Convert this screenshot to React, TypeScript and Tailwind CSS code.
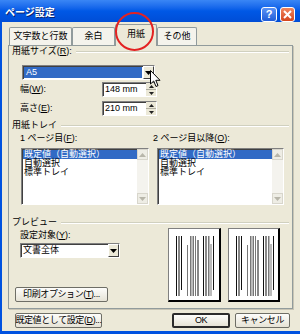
import React from 'react';

const sunken =
  'border border-t-[#808080] border-l-[#808080] border-r-white border-b-white shadow-[inset_1px_1px_0_#404040]';

const GroupHeader: React.FC<{ children: React.ReactNode }> = ({ children }) => (
  <div className="flex items-center h-[12px] px-[3px]">
    <span className="whitespace-nowrap">{children}</span>
    <div className="flex-1 ml-[4px] h-[2px] border-t border-t-[#D0D0BF] border-b border-b-white" />
  </div>
);

const DownTri: React.FC<{ color?: string }> = ({ color = '#000' }) => (
  <svg width="7" height="4" viewBox="0 0 7 4">
    <path d="M0 0 H7 L3.5 4 Z" fill={color} />
  </svg>
);

const UpTri: React.FC<{ color?: string }> = ({ color = '#000' }) => (
  <svg width="7" height="4" viewBox="0 0 7 4">
    <path d="M0 4 H7 L3.5 0 Z" fill={color} />
  </svg>
);

const DropBtn: React.FC = () => (
  <div className="w-[11px] h-full flex items-center justify-center bg-[#ECE9D8] border border-t-white border-l-white border-r-[#404040] border-b-[#404040]">
    <DownTri />
  </div>
);

const SpinBox: React.FC<{ value: string }> = ({ value }) => (
  <div className={`flex w-[55px] h-[15px] bg-white ${sunken}`}>
    <div className="flex-1 pl-[2px] leading-[13px]">{value}</div>
    <div className="w-[10px] flex flex-col bg-[#ECE9D8]">
      <div className="flex-1 flex items-center justify-center border-b border-b-[#B0AEA0]">
        <svg width="5" height="3" viewBox="0 0 5 3"><path d="M0 3 H5 L2.5 0 Z" fill="#222" /></svg>
      </div>
      <div className="flex-1 flex items-center justify-center">
        <svg width="5" height="3" viewBox="0 0 5 3"><path d="M0 0 H5 L2.5 3 Z" fill="#222" /></svg>
      </div>
    </div>
  </div>
);

const ListBox: React.FC<{ width: string }> = ({ width }) => {
  const items = ['既定値（自動選択）', '自動選択', '標準トレイ'];
  return (
    <div className={`flex h-[57px] bg-white ${sunken} ${width}`}>
      <div className="flex-1 pt-[1px] pl-[1px]">
        {items.map((item, i) => (
          <div
            key={item}
            className={`h-[9px] leading-[9px] pl-[1px] whitespace-nowrap ${
              i === 0 ? 'bg-[#316AC5] text-white' : ''
            }`}
          >
            {item}
          </div>
        ))}
      </div>
      <div className="w-[11px] flex flex-col justify-between bg-[#F4F3EE]">
        <div className="h-[11px] flex items-center justify-center bg-[#EEEDE5] border border-[#D8D6CC]">
          <UpTri color="#B8B6AA" />
        </div>
        <div className="h-[11px] flex items-center justify-center bg-[#EEEDE5] border border-[#D8D6CC]">
          <DownTri color="#B8B6AA" />
        </div>
      </div>
    </div>
  );
};

const PagePreview: React.FC<{ width: number }> = ({ width }) => {
  const lines = [
    { x: 9, y1: 10, y2: 70, c: '#111', w: 1 },
    { x: 11.5, y1: 10, y2: 70, c: '#111', w: 1 },
    { x: 14, y1: 10, y2: 64, c: '#111', w: 1 },
    { x: 20, y1: 19, y2: 70, c: '#777', w: 1 },
    { x: 23, y1: 10, y2: 70, c: '#777', w: 1.5 },
    { x: 25.5, y1: 10, y2: 70, c: '#777', w: 1.5 },
    { x: 28, y1: 10, y2: 70, c: '#777', w: 1 },
    { x: 30.5, y1: 14, y2: 70, c: '#111', w: 1 },
    { x: 36, y1: 10, y2: 70, c: '#111', w: 1 },
    { x: 38.5, y1: 10, y2: 70, c: '#111', w: 1 },
    { x: 41, y1: 10, y2: 70, c: '#777', w: 1.5 },
    { x: 43.5, y1: 18, y2: 70, c: '#777', w: 1 },
    { x: 46, y1: 10, y2: 64, c: '#111', w: 1 },
  ];
  return (
    <div
      className="h-[74px] bg-white border border-[#808080] border-r-2 border-b-2 border-r-black border-b-black"
      style={{ width }}
    >
      <svg width={width - 3} height="71" viewBox={`0 0 ${width - 3} 71`}>
        {lines.map((l, i) => (
          <rect key={i} x={l.x - 2} y={l.y1 - 3} width={l.w} height={l.y2 - l.y1} fill={l.c} />
        ))}
      </svg>
    </div>
  );
};

const Button: React.FC<{ children: React.ReactNode; className?: string; primary?: boolean }> = ({
  children,
  className = '',
  primary,
}) => (
  <div
    className={`h-[15px] flex items-center justify-center whitespace-nowrap tracking-[-0.4px] rounded-[2px] bg-linear-to-b from-[#FDFDFB] to-[#E6E3D6] ${
      primary ? 'border-2 border-[#2B2B2B]' : 'border border-[#6E6E66]'
    } ${className}`}
  >
    {children}
  </div>
);

const Tab: React.FC<{ label: string; width: string; selected?: boolean }> = ({ label, width, selected }) => (
  <div
    className={`${width} flex items-center justify-center rounded-t-[2px] border-t border-l border-r border-[#919B9C] ${
      selected ? 'h-[22px] -mb-px relative z-10 bg-[#ECE9D8] pb-[2px]' : 'h-[18px] bg-[#F4F3EC]'
    }`}
  >
    {label}
  </div>
);

export default function App() {
  return (
    <div className="relative w-[300px] h-[334px] overflow-hidden bg-[#0052E0] flex flex-col text-[9px] text-black font-['Liberation_Sans','Noto_Sans_CJK_JP',sans-serif]">
      {/* title bar */}
      <div className="h-[22px] flex bg-linear-to-b from-[#3A86F5] via-[#0058E6] to-[#004DD6]">
        <div className="flex items-center pl-[5px] pt-[3px] text-white font-bold text-[10px] [text-shadow:1px_1px_0_#0A246A]">
          ページ設定
        </div>
        <div className="ml-auto mr-[5px] mt-[7px] flex gap-[3px] h-[15px]">
          <div className="w-[16px] h-[15px] rounded-[3px] border border-white bg-linear-to-b from-[#5B92F5] to-[#1F5CD8] text-white font-bold text-[11px] leading-[13px] text-center">
            ?
          </div>
          <div className="w-[15px] h-[15px] rounded-[3px] border border-white bg-linear-to-b from-[#F0855E] to-[#D4441A] flex items-center justify-center">
            <svg width="9" height="9" viewBox="0 0 9 9">
              <path d="M1 1 L8 8 M8 1 L1 8" stroke="white" strokeWidth="2" />
            </svg>
          </div>
        </div>
      </div>

      {/* body */}
      <div className="flex-1 ml-[2px] mb-[3px] bg-[#ECE9D8] flex flex-col">
        <div className="h-[23px] flex items-end pl-[7px]">
          <Tab label="文字数と行数" width="w-[63px]" />
          <Tab label="余白" width="w-[43px]" />
          <Tab label="用紙" width="w-[42px]" selected />
          <Tab label="その他" width="w-[40px]" />
        </div>

        <div className="ml-[6px] w-[285px] h-[264px] border border-[#919B9C] shadow-[1px_1px_0_#C8C5B5] flex flex-col">
          <GroupHeader>
            用紙サイズ(<u>R</u>):
          </GroupHeader>

          <div className={`mt-[7px] ml-[13px] w-[133px] h-[15px] flex bg-white ${sunken}`}>
            <div className="flex-1 p-[1px]">
              <div className="h-full bg-[#316AC5] text-white leading-[11px] pl-[2px]">A5</div>
            </div>
            <DropBtn />
          </div>

          <div className="mt-[2px] ml-[11px] h-[15px] flex items-center">
            <div className="w-[82px]">
              幅(<u>W</u>):
            </div>
            <SpinBox value="148 mm" />
          </div>
          <div className="mt-[4px] ml-[11px] h-[15px] flex items-center">
            <div className="w-[82px]">
              高さ(<u>E</u>):
            </div>
            <SpinBox value="210 mm" />
          </div>

          <div className="mt-[4px]">
            <GroupHeader>用紙トレイ</GroupHeader>
          </div>
          <div className="mt-[1px] h-[12px] flex items-center">
            <div className="ml-[11px] w-[133px]">
              1 ページ目(<u>F</u>):
            </div>
            <div>
              2 ページ目以降(<u>O</u>):
            </div>
          </div>
          <div className="mt-[3px] ml-[12px] flex gap-[8px]">
            <ListBox width="w-[128px]" />
            <ListBox width="w-[127px]" />
          </div>

          <div className="mt-[12px]">
            <GroupHeader>プレビュー</GroupHeader>
          </div>
          <div className="flex">
            <div className="ml-[11px] flex flex-col">
              <div className="h-[12px] leading-[12px]">
                設定対象(<u>Y</u>):
              </div>
              <div className={`mt-[2px] w-[100px] h-[15px] flex bg-white ${sunken}`}>
                <div className="flex-1 pl-[2px] leading-[13px]">文書全体</div>
                <DropBtn />
              </div>
              <Button className="mt-[29px] -ml-[5px] w-[93px]">
                印刷オプション(<u>T</u>)...
              </Button>
            </div>
            <div className="ml-auto mr-[12px] -mt-px flex gap-[7px]">
              <PagePreview width={53} />
              <PagePreview width={52} />
            </div>
          </div>
        </div>

        <div className="mt-[4px] flex">
          <Button className="ml-[13px] w-[87px]">
            既定値として設定(<u>D</u>)...
          </Button>
          <Button primary className="ml-auto w-[58px]">
            OK
          </Button>
          <Button className="ml-[5px] mr-[10px] w-[55px]">キャンセル</Button>
        </div>
      </div>

      {/* red annotation circle */}
      <div className="absolute left-[115px] top-[12px] w-[39px] h-[39px] rounded-full border-2 border-[#E32222] z-20" />

      {/* mouse pointer */}
      <svg className="absolute left-[150px] top-[70px] z-20" width="11" height="18" viewBox="0 0 11 18">
        <path d="M0.5 0.5 V14 L3.7 11 L6 16.5 L8 15.6 L5.8 10.3 H10 Z" fill="white" stroke="black" strokeWidth="1" />
      </svg>
    </div>
  );
}
